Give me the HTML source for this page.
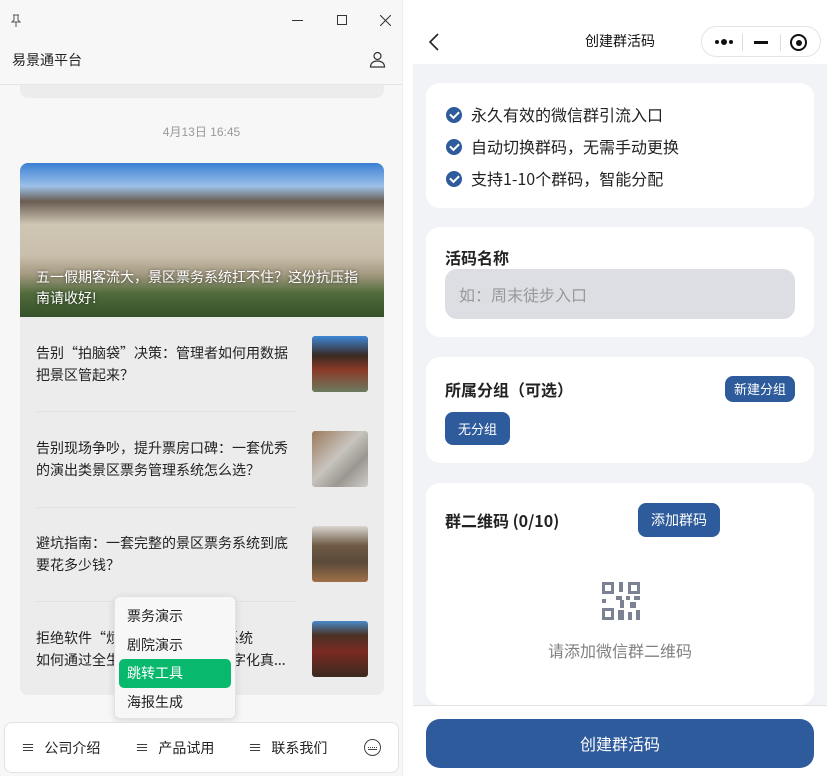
<!DOCTYPE html>
<html><head><meta charset="utf-8"><style>
*{margin:0;padding:0;box-sizing:border-box}
body{width:835px;height:776px;background:#fff;font-family:"Liberation Sans","Noto Sans CJK SC",sans-serif;position:relative;overflow:hidden;color:#1a1a1a}
.abs{position:absolute}
.cjk{font-family:"Noto Sans CJK SC","Liberation Sans",sans-serif}
#left{left:0;top:0;width:403px;height:776px;background:#f7f7f7;border-right:1px solid #eee}
.t{font-size:14px;line-height:22px;color:#222}
.item{position:absolute;left:36px;width:262px}
.thumb{position:absolute;left:312px;width:56px;height:56px;border-radius:3px}
.sep{position:absolute;left:36px;width:260px;height:1px;background:#e2e2e2}
.card{position:absolute;left:426px;width:388px;background:#fff;border-radius:14px}
.btn{position:absolute;background:#2d5b9c;color:#fff;border-radius:8px;font-size:13px;text-align:center}
.chk{display:inline-block;width:16px;height:16px;border-radius:50%;background:#2d5b9c;vertical-align:-2px;margin-right:9px;position:relative}
.chk:after{content:"";position:absolute;left:4px;top:4px;width:7px;height:4px;border-left:2px solid #fff;border-bottom:2px solid #fff;transform:rotate(-45deg)}
</style></head><body>
<div id="left" class="abs">
 <svg class="abs" style="left:10px;top:14px" width="12" height="14" viewBox="0 0 12 14"><path d="M3 1h6M4 1v5L2 8h8L8 6V1M6 8v5" fill="none" stroke="#555" stroke-width="1"/></svg>
 <div class="abs" style="left:292px;top:20px;width:11px;height:1px;background:#333"></div>
 <div class="abs" style="left:337px;top:15px;width:10px;height:10px;border:1px solid #333"></div>
 <svg class="abs" style="left:380px;top:15px" width="11" height="11"><path d="M0 0L11 11M11 0L0 11" stroke="#333" stroke-width="1"/></svg>
 <div class="abs cjk" style="left:12px;top:50px;font-size:14px;color:#222">易景通平台</div>
 <svg class="abs" style="left:369px;top:51px" width="17" height="17" viewBox="0 0 17 17"><circle cx="8.5" cy="5" r="3.5" fill="none" stroke="#333" stroke-width="1.2"/><path d="M1.5 16c0-4 3-6 7-6s7 2 7 6z" fill="none" stroke="#333" stroke-width="1.2"/></svg>
 <div class="abs" style="left:0;top:84px;width:403px;height:1px;background:#e6e6e6"></div>
 <div class="abs" style="left:20px;top:85px;width:364px;height:13px;background:#ececed;border-radius:0 0 8px 8px"></div>
 <div class="abs" style="left:0;top:123px;width:403px;text-align:center;font-size:12px;color:#999">4月13日 16:45</div>
 <div class="abs" style="left:20px;top:163px;width:364px;height:532px;background:#ececed;border-radius:8px;overflow:hidden">
  <div class="abs" style="left:0;top:0;width:364px;height:154px;background:linear-gradient(180deg,#3b7fd4 0%,#9cc0e8 15%,#6a5e52 25%,#cfc6b4 40%,#c9bfac 60%,#a59a82 72%,#4f6a3a 85%,#36502a 100%)"></div>
  <div class="abs cjk" style="left:16px;top:104px;width:325px;font-size:14px;line-height:21px;color:#fff;text-shadow:0 0 3px rgba(0,0,0,.6)">五一假期客流大，景区票务系统扛不住？这份抗压指南请收好!</div>
 </div>
 <div class="item t cjk" style="top:342px">告别“拍脑袋”决策：管理者如何用数据把景区管起来？</div>
 <div class="thumb" style="top:336px;background:linear-gradient(180deg,#3d86d6 0%,#3a2a22 35%,#8a3a28 60%,#6c7a60 100%)"></div>
 <div class="sep" style="top:411px"></div>
 <div class="item t cjk" style="top:437px">告别现场争吵，提升票房口碑：一套优秀的演出类景区票务管理系统怎么选？</div>
 <div class="thumb" style="top:431px;background:linear-gradient(135deg,#9a7a5a 0%,#c8c4be 45%,#9a9690 70%,#d0cecb 100%)"></div>
 <div class="sep" style="top:507px"></div>
 <div class="item t cjk" style="top:532px">避坑指南：一套完整的景区票务系统到底要花多少钱？</div>
 <div class="thumb" style="top:526px;background:linear-gradient(180deg,#d9d6d0 0%,#6f5a44 35%,#5a4a3a 65%,#a07048 100%)"></div>
 <div class="sep" style="top:601px"></div>
 <div class="item t cjk" style="top:627px">拒绝软件“烦恼”，看景区票务系统<br>如何通过全生命周期管理助力数字化真...</div>
 <div class="thumb" style="top:621px;background:linear-gradient(180deg,#4a8ac8 0%,#4b3226 25%,#7a2a22 55%,#3a2a20 100%)"></div>
 <div class="abs cjk" style="left:114px;top:596px;width:122px;height:123px;background:#f7f7f7;border:1px solid #e2e2e2;border-radius:6px;box-shadow:0 2px 8px rgba(0,0,0,.12);font-size:14px;color:#222">
  <div class="abs" style="left:12px;top:9px">票务演示</div>
  <div class="abs" style="left:12px;top:38px">剧院演示</div>
  <div class="abs" style="left:4px;top:62px;width:112px;height:29px;background:#07b86d;border-radius:5px;color:#fff;padding:4px 0 0 8px">跳转工具</div>
  <div class="abs" style="left:12px;top:95px">海报生成</div>
 </div>
 <div class="abs cjk" style="left:4px;top:722px;width:395px;height:51px;background:#fff;border:1px solid #e2e2e2;border-radius:8px;font-size:14px;color:#222">
  <div class="abs" style="left:16px;top:15px">≡&nbsp;&nbsp;&nbsp;公司介绍</div>
  <div class="abs" style="left:130px;top:15px">≡&nbsp;&nbsp;&nbsp;产品试用</div>
  <div class="abs" style="left:243px;top:15px">≡&nbsp;&nbsp;&nbsp;联系我们</div>
  <div class="abs" style="left:359px;top:16px;width:17px;height:17px;border:1px solid #444;border-radius:50%"><div class="abs" style="left:3px;top:7px;width:9px;height:3px;border-top:1px dotted #444;border-bottom:1px solid #444"></div></div>
 </div>
</div>
<!-- right -->
<div class="abs" style="left:413px;top:64px;width:414px;height:641px;background:#f2f3f6"></div>
<svg class="abs" style="left:428px;top:33px" width="12" height="18"><path d="M10 1L2 9l8 8" fill="none" stroke="#222" stroke-width="1.6"/></svg>
<div class="abs cjk" style="left:585px;top:31px;font-size:14px;color:#111">创建群活码</div>
<div class="abs" style="left:701px;top:26px;width:120px;height:31px;border:1px solid #e4e4e4;border-radius:16px;background:#fff">
 <div class="abs" style="left:13px;top:13px;width:4px;height:4px;border-radius:50%;background:#111"></div>
 <div class="abs" style="left:19px;top:12px;width:6px;height:6px;border-radius:50%;background:#111"></div>
 <div class="abs" style="left:27px;top:13px;width:4px;height:4px;border-radius:50%;background:#111"></div>
 <div class="abs" style="left:40px;top:7px;width:1px;height:17px;background:#ddd"></div>
 <div class="abs" style="left:52px;top:14px;width:14px;height:3px;background:#111"></div>
 <div class="abs" style="left:78px;top:7px;width:1px;height:17px;background:#ddd"></div>
 <div class="abs" style="left:88px;top:7px;width:17px;height:17px;border:2px solid #111;border-radius:50%"><div class="abs" style="left:3.5px;top:3.5px;width:6px;height:6px;border-radius:50%;background:#111"></div></div>
</div>
<div class="card cjk" style="top:83px;height:125px;font-size:16px;color:#222">
 <div class="abs" style="left:20px;top:19px"><span class="chk"></span>永久有效的微信群引流入口</div>
 <div class="abs" style="left:20px;top:51px"><span class="chk"></span>自动切换群码，无需手动更换</div>
 <div class="abs" style="left:20px;top:83px"><span class="chk"></span>支持1-10个群码，智能分配</div>
</div>
<div class="card cjk" style="top:227px;height:110px">
 <div class="abs" style="left:19px;top:18px;font-size:16px;font-weight:bold;color:#222">活码名称</div>
 <div class="abs" style="left:19px;top:42px;width:350px;height:50px;background:#dcdee4;border-radius:12px;font-size:16px;color:#999;padding:13px 0 0 14px">如：周末徒步入口</div>
</div>
<div class="card cjk" style="top:357px;height:106px">
 <div class="abs" style="left:19px;top:20px;font-size:16px;font-weight:bold;color:#222">所属分组（可选）</div>
 <div class="btn" style="left:299px;top:19px;width:70px;height:26px;line-height:26px">新建分组</div>
 <div class="btn" style="left:19px;top:55px;width:65px;height:33px;line-height:33px">无分组</div>
</div>
<div class="card cjk" style="top:483px;height:222px">
 <div class="abs" style="left:19px;top:25px;font-size:16px;font-weight:bold;color:#222">群二维码 (0/10)</div>
 <div class="btn" style="left:212px;top:20px;width:82px;height:34px;line-height:34px;font-size:14px">添加群码</div>
 <svg class="abs" style="left:176px;top:99px" width="38" height="38" viewBox="0 0 38 38" fill="#7a8294"><path d="M0 0h12v12H0zM3 3v6h6V3zM26 0h12v12H26zM29 3v6h6V3zM0 26h12v12H0zM3 29v6h6v-6zM17 0h4v10h-4zM0 17h4v4H0zM14 14h6v4h-6zM24 14h4v4h-4zM32 14h6v4h-6zM18 18h4v8h-4zM28 20h6v6h-6zM16 28h6v10h-6zM26 30h4v8h-4zM34 28h4v10h-4z"/></svg>
 <div class="abs" style="left:0;top:155px;width:388px;text-align:center;font-size:16px;color:#808080">请添加微信群二维码</div>
</div>
<div class="abs" style="left:413px;top:705px;width:414px;height:1px;background:#e3e3e3"></div>
<div class="btn cjk" style="left:426px;top:719px;width:388px;height:49px;line-height:49px;border-radius:14px;font-size:16px">创建群活码</div>
</body></html>
